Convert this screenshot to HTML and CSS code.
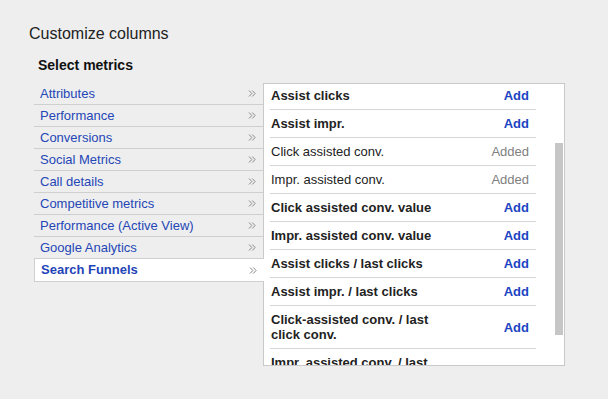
FILE: index.html
```html
<!DOCTYPE html>
<html>
<head>
<meta charset="utf-8">
<link rel="stylesheet" href="styles.css">
</head>
<body>
<div class="page">
  <h1 class="title">Customize columns</h1>
  <h2 class="subtitle">Select metrics</h2>
  <div class="picker">
    <ul class="cats">
      <li class="cat"><span>Attributes</span><svg class="chev" width="8" height="7" viewBox="0 0 8 7"><path d="M1 0.5L3.8 3.5L1 6.5M4.3 0.5L7.1 3.5L4.3 6.5"/></svg></li>
      <li class="cat"><span>Performance</span><svg class="chev" width="8" height="7" viewBox="0 0 8 7"><path d="M1 0.5L3.8 3.5L1 6.5M4.3 0.5L7.1 3.5L4.3 6.5"/></svg></li>
      <li class="cat"><span>Conversions</span><svg class="chev" width="8" height="7" viewBox="0 0 8 7"><path d="M1 0.5L3.8 3.5L1 6.5M4.3 0.5L7.1 3.5L4.3 6.5"/></svg></li>
      <li class="cat"><span>Social Metrics</span><svg class="chev" width="8" height="7" viewBox="0 0 8 7"><path d="M1 0.5L3.8 3.5L1 6.5M4.3 0.5L7.1 3.5L4.3 6.5"/></svg></li>
      <li class="cat"><span>Call details</span><svg class="chev" width="8" height="7" viewBox="0 0 8 7"><path d="M1 0.5L3.8 3.5L1 6.5M4.3 0.5L7.1 3.5L4.3 6.5"/></svg></li>
      <li class="cat"><span>Competitive metrics</span><svg class="chev" width="8" height="7" viewBox="0 0 8 7"><path d="M1 0.5L3.8 3.5L1 6.5M4.3 0.5L7.1 3.5L4.3 6.5"/></svg></li>
      <li class="cat"><span>Performance (Active View)</span><svg class="chev" width="8" height="7" viewBox="0 0 8 7"><path d="M1 0.5L3.8 3.5L1 6.5M4.3 0.5L7.1 3.5L4.3 6.5"/></svg></li>
      <li class="cat"><span>Google Analytics</span><svg class="chev" width="8" height="7" viewBox="0 0 8 7"><path d="M1 0.5L3.8 3.5L1 6.5M4.3 0.5L7.1 3.5L4.3 6.5"/></svg></li>
      <li class="cat selected"><span>Search Funnels</span><svg class="chev" width="8" height="7" viewBox="0 0 8 7"><path d="M1 0.5L3.8 3.5L1 6.5M4.3 0.5L7.1 3.5L4.3 6.5"/></svg></li>
    </ul>
    <div class="panel">
      <ul class="metrics">
        <li class="metric"><span class="name">Assist clicks</span><span class="add">Add</span></li>
        <li class="metric"><span class="name">Assist impr.</span><span class="add">Add</span></li>
        <li class="metric added"><span class="name">Click assisted conv.</span><span class="add">Added</span></li>
        <li class="metric added"><span class="name">Impr. assisted conv.</span><span class="add">Added</span></li>
        <li class="metric"><span class="name">Click assisted conv. value</span><span class="add">Add</span></li>
        <li class="metric"><span class="name">Impr. assisted conv. value</span><span class="add">Add</span></li>
        <li class="metric"><span class="name">Assist clicks / last clicks</span><span class="add">Add</span></li>
        <li class="metric"><span class="name">Assist impr. / last clicks</span><span class="add">Add</span></li>
        <li class="metric"><span class="name">Click-assisted conv. / last click conv.</span><span class="add">Add</span></li>
        <li class="metric"><span class="name">Impr. assisted conv. / last impr. conv.</span><span class="add">Add</span></li>
      </ul>
      <div class="scrollthumb"></div>
    </div>
  </div>
</div>
</body>
</html>
```

FILE: styles.css
```css
html, body {
  margin: 0;
  padding: 0;
  background: #eeeeee;
}
body {
  font-family: Arial, "Liberation Sans", sans-serif;
  color: #222;
}
.page {
  padding: 24px 0 0 29px;
}
.title {
  margin: 0;
  font-size: 16px;
  line-height: 20px;
  font-weight: normal;
  color: #222;
}
.subtitle {
  margin: 12px 0 0 9px;
  font-size: 14px;
  line-height: 18px;
  font-weight: bold;
  color: #111;
}
.picker {
  display: flex;
  align-items: flex-start;
  margin: 9px 0 0 5px;
}
.cats {
  list-style: none;
  margin: 0;
  padding: 0;
  width: 229px;
  position: relative;
  z-index: 2;
}
.cat {
  display: flex;
  align-items: center;
  justify-content: space-between;
  height: 21px;
  line-height: 21px;
  padding: 0 7px 0 6px;
  border-bottom: 1px solid #cfcfcf;
  font-size: 13px;
  color: #2446b6;
}
.chev {
  fill: none;
  stroke: #8a8a8a;
  stroke-width: 1;
}
.cat.selected {
  background: #fff;
  height: 22px;
  line-height: 22px;
  border-left: 1px solid #cfcfcf;
  padding-left: 6px;
  margin-right: -1px;
  padding-right: 7px;
  font-weight: bold;
  color: #1f45b8;
}
.cat.selected .chev {
  margin-right: 0;
}
.panel {
  position: relative;
  width: 300px;
  height: 281px;
  background: #fff;
  border: 1px solid #c9c9c9;
  overflow: hidden;
}
.metrics {
  list-style: none;
  margin: -2px 0 0 6px;
  padding: 0;
  width: 266px;
}
.metric {
  display: flex;
  align-items: center;
  justify-content: space-between;
  min-height: 27px;
  padding: 6px 7px 6px 1px;
  box-sizing: border-box;
  border-bottom: 1px solid #d6d6d6;
  font-size: 13px;
  line-height: 15px;
  font-weight: bold;
  color: #222;
}
.metric .name {
  max-width: 172px;
}
.metric .add {
  color: #1c44c2;
  font-weight: bold;
}
.metric.added {
  font-weight: normal;
}
.metric.added .add {
  color: #808080;
  font-weight: normal;
}
.scrollthumb {
  position: absolute;
  top: 59px;
  right: 1px;
  width: 8px;
  height: 192px;
  background: #c6c6c6;
}
```
